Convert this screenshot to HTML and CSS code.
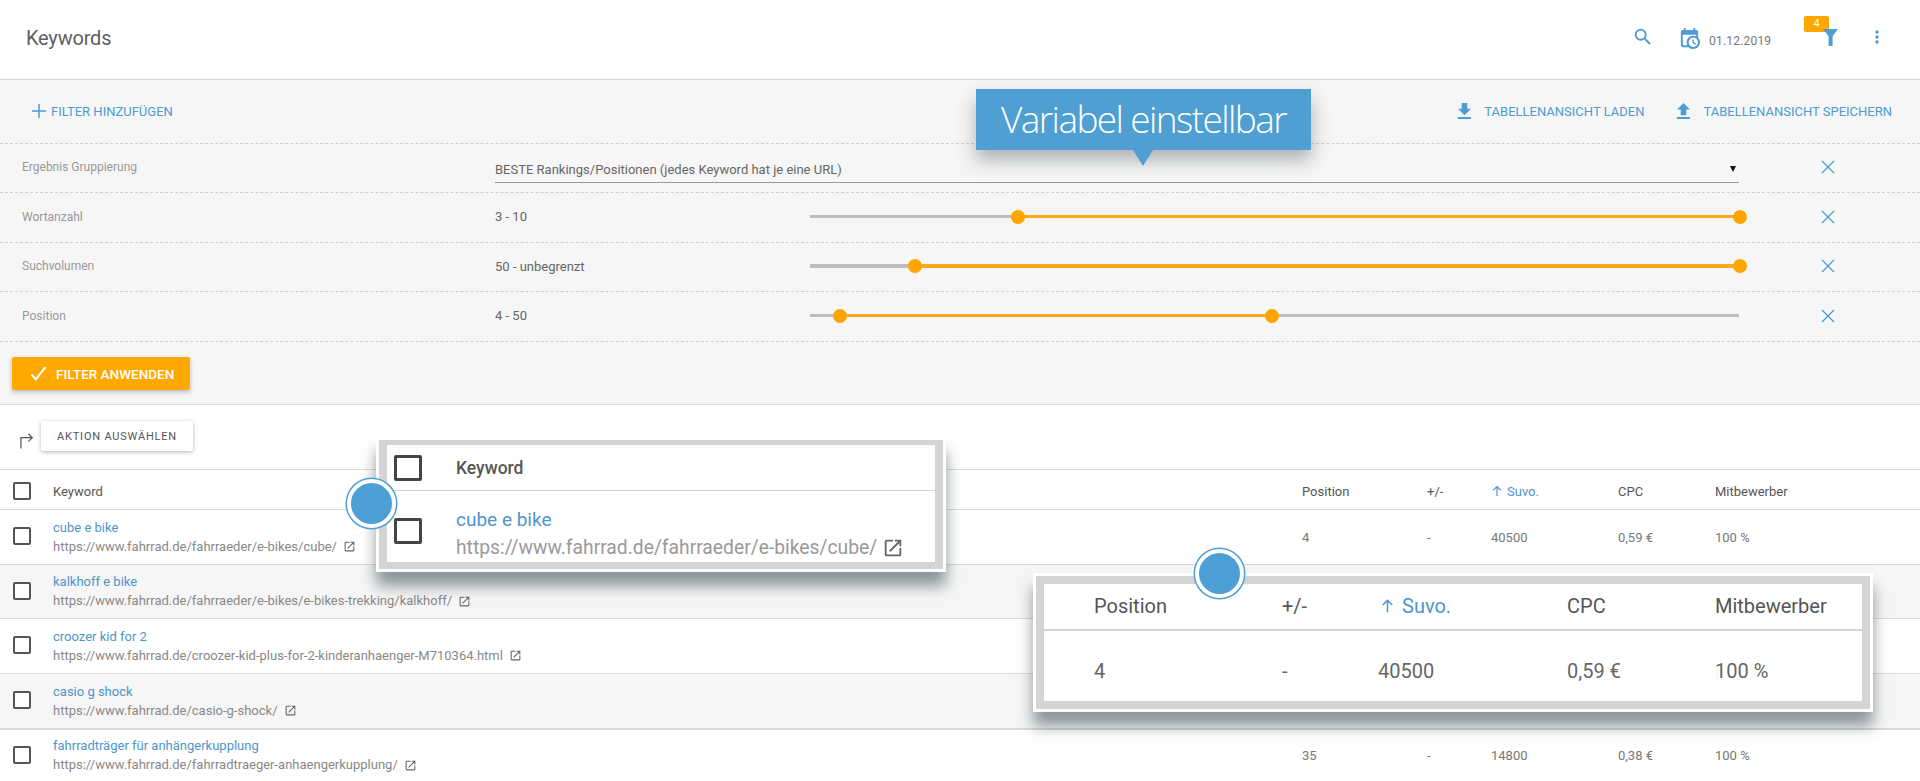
FILE: index.html
```html
<!DOCTYPE html>
<html lang="de">
<head>
<meta charset="utf-8">
<title>Keywords</title>
<link rel="stylesheet" href="styles.css">
</head>
<body>
<svg class="defs" width="0" height="0" aria-hidden="true">
  <symbol id="i-ext" viewBox="0 0 24 24"><path d="M19 19H5V5h7V3H5a2 2 0 0 0-2 2v14a2 2 0 0 0 2 2h14c1.1 0 2-.9 2-2v-7h-2v7zM14 3v2h3.59l-9.83 9.83 1.41 1.41L19 6.41V10h2V3h-7z"/></symbol>
  <symbol id="i-x" viewBox="0 0 14 14"><path d="M1 1l12 12M13 1L1 13" fill="none" stroke="currentColor" stroke-width="1.3"/></symbol>
  <symbol id="i-up" viewBox="0 0 12 12"><path d="M6 11V1.5M2.2 5.2L6 1.5l3.8 3.7" fill="none" stroke="currentColor" stroke-width="1.2"/></symbol>
</svg>

<header class="topbar">
  <h1 class="title">Keywords</h1>
  <div class="top-actions">
    <svg class="ic-search" viewBox="0 0 24 24"><path d="M15.5 14h-.79l-.28-.27A6.471 6.471 0 0 0 16 9.5 6.5 6.5 0 1 0 9.5 16c1.61 0 3.09-.59 4.23-1.57l.27.28v.79l5 4.99L20.49 19l-4.99-5zm-6 0C7.01 14 5 11.99 5 9.5S7.01 5 9.5 5 14 7.01 14 9.5 11.99 14 9.5 14z"/></svg>
    <svg class="ic-cal" viewBox="0 0 24 24"><path d="M15,13H16.5V15.82L18.94,17.23L18.19,18.53L15,16.69V13M19,8H5V19H9.67C9.24,18.09 9,17.07 9,16A7,7 0 0,1 16,9C17.07,9 18.09,9.24 19,9.67V8M5,21C3.89,21 3,20.1 3,19V5C3,3.89 3.89,3 5,3H6V1H8V3H16V1H18V3H19A2,2 0 0,1 21,5V11.1C22.24,12.36 23,14.09 23,16A7,7 0 0,1 16,23C14.09,23 12.36,22.24 11.1,21H5M16,11.15A4.85,4.85 0 0,0 11.15,16C11.15,18.68 13.32,20.85 16,20.85A4.85,4.85 0 0,0 20.85,16C20.85,13.32 18.68,11.15 16,11.15Z"/></svg>
    <span class="date">01.12.2019</span>
    <span class="funnel">
      <span class="badge">4</span>
      <svg class="ic-funnel" viewBox="0 0 15 17"><path d="M0 0h15L9.6 7.2V17H5.6V7.2z"/></svg>
    </span>
    <svg class="ic-more" viewBox="0 0 24 24"><path d="M12 8c1.1 0 2-.9 2-2s-.9-2-2-2-2 .9-2 2 .9 2 2 2zm0 2c-1.1 0-2 .9-2 2s.9 2 2 2 2-.9 2-2-.9-2-2-2zm0 6c-1.1 0-2 .9-2 2s.9 2 2 2 2-.9 2-2-.9-2-2-2z"/></svg>
  </div>
</header>

<section class="filters">
  <div class="filter-tools">
    <span class="tool tool-add">
      <svg class="ic-plus" viewBox="0 0 14 14"><path d="M7 0v14M0 7h14" fill="none" stroke="currentColor" stroke-width="1.5"/></svg>
      FILTER HINZUFÜGEN
    </span>
    <span class="tool tool-load">
      <svg class="ic-tool" viewBox="5 3 14 17"><path d="M19 9h-4V3H9v6H5l7 7 7-7zM5 18v2h14v-2H5z"/></svg>
      TABELLENANSICHT LADEN
    </span>
    <span class="tool tool-save">
      <svg class="ic-tool" viewBox="5 3 14 17"><path d="M9 16h6v-6h4l-7-7-7 7h4zm-4 2h14v2H5z"/></svg>
      TABELLENANSICHT SPEICHERN
    </span>
  </div>

  <div class="frow frow-49">
    <span class="flabel">Ergebnis Gruppierung</span>
    <div class="select">
      <span>BESTE Rankings/Positionen (jedes Keyword hat je eine URL)</span>
      <span class="caret"></span>
    </div>
    <svg class="ic-x"><use href="#i-x"/></svg>
  </div>
  <div class="frow frow-50">
    <span class="flabel">Wortanzahl</span>
    <span class="fvalue">3 - 10</span>
    <div class="slider">
      <span class="fill" style="left:22.4%;right:0"></span>
      <span class="thumb" style="left:22.4%"></span>
      <span class="thumb" style="left:100.1%"></span>
    </div>
    <svg class="ic-x"><use href="#i-x"/></svg>
  </div>
  <div class="frow frow-49">
    <span class="flabel">Suchvolumen</span>
    <span class="fvalue">50 - unbegrenzt</span>
    <div class="slider slider-thick">
      <span class="fill" style="left:11.3%;right:0"></span>
      <span class="thumb" style="left:11.3%"></span>
      <span class="thumb" style="left:100.1%"></span>
    </div>
    <svg class="ic-x"><use href="#i-x"/></svg>
  </div>
  <div class="frow frow-50">
    <span class="flabel">Position</span>
    <span class="fvalue">4 - 50</span>
    <div class="slider">
      <span class="fill" style="left:3.2%;right:50%"></span>
      <span class="thumb" style="left:3.2%"></span>
      <span class="thumb" style="left:49.7%"></span>
    </div>
    <svg class="ic-x"><use href="#i-x"/></svg>
  </div>
  <div class="apply-bar">
    <button class="apply">
      <svg class="ic-check" viewBox="0 0 16 16"><path d="M1.5 9l4 4.5L14.5 2" fill="none" stroke="currentColor" stroke-width="2"/></svg>
      FILTER ANWENDEN
    </button>
  </div>
</section>

<section class="table-wrap">
  <div class="actions">
    <svg class="ic-redirect" viewBox="0 0 15 17"><path d="M1 17V5.5h12M9 1.5l4.2 4-4.2 4" fill="none" stroke="#555" stroke-width="1.3"/></svg>
    <button class="action-btn">AKTION AUSWÄHLEN</button>
  </div>

  <div class="trow thead">
    <span class="box"></span>
    <span>Keyword</span>
    <span>Position</span>
    <span>+/-</span>
    <span class="sorted"><svg class="ic-up"><use href="#i-up"/></svg>Suvo.</span>
    <span>CPC</span>
    <span>Mitbewerber</span>
  </div>

  <div class="trow tbody">
    <span class="box"></span>
    <div class="kw"><a class="kw-link">cube e bike</a><span class="kw-url">https://www.fahrrad.de/fahrraeder/e-bikes/cube/<svg class="ic-ext"><use href="#i-ext"/></svg></span></div>
    <span>4</span><span>-</span><span>40500</span><span>0,59 €</span><span>100 %</span>
  </div>
  <div class="trow tbody alt row-54">
    <span class="box"></span>
    <div class="kw"><a class="kw-link">kalkhoff e bike</a><span class="kw-url">https://www.fahrrad.de/fahrraeder/e-bikes/e-bikes-trekking/kalkhoff/<svg class="ic-ext"><use href="#i-ext"/></svg></span></div>
  </div>
  <div class="trow tbody">
    <span class="box"></span>
    <div class="kw"><a class="kw-link">croozer kid for 2</a><span class="kw-url">https://www.fahrrad.de/croozer-kid-plus-for-2-kinderanhaenger-M710364.html<svg class="ic-ext"><use href="#i-ext"/></svg></span></div>
  </div>
  <div class="trow tbody alt thick">
    <span class="box"></span>
    <div class="kw"><a class="kw-link">casio g shock</a><span class="kw-url">https://www.fahrrad.de/casio-g-shock/<svg class="ic-ext"><use href="#i-ext"/></svg></span></div>
  </div>
  <div class="trow tbody last">
    <span class="box"></span>
    <div class="kw"><a class="kw-link">fahrradträger für anhängerkupplung</a><span class="kw-url">https://www.fahrrad.de/fahrradtraeger-anhaengerkupplung/<svg class="ic-ext"><use href="#i-ext"/></svg></span></div>
    <span>35</span><span>-</span><span>14800</span><span>0,38 €</span><span>100 %</span>
  </div>
</section>

<aside class="tip">Variabel einstellbar</aside>

<aside class="zoom zoom-left">
  <div class="zl-head"><span class="box box-lg"></span><span>Keyword</span></div>
  <div class="zl-row">
    <span class="box box-lg"></span>
    <div class="zl-kw"><a class="kw-link">cube e bike</a><span class="kw-url">https://www.fahrrad.de/fahrraeder/e-bikes/cube/<svg class="ic-ext"><use href="#i-ext"/></svg></span></div>
  </div>
</aside>

<aside class="zoom zoom-right">
  <div class="zr-row zr-head">
    <span>Position</span><span>+/-</span><span class="sorted"><svg class="ic-up"><use href="#i-up"/></svg>Suvo.</span><span>CPC</span><span>Mitbewerber</span>
  </div>
  <div class="zr-row zr-body">
    <span>4</span><span>-</span><span>40500</span><span>0,59 €</span><span>100 %</span>
  </div>
</aside>

<span class="dot dot-left"></span>
<span class="dot dot-right"></span>
</body>
</html>
```

FILE: styles.css
```css
* { box-sizing: border-box; }
html, body { height: 781px; overflow: hidden; }
body {
  margin: 0;
  position: relative;
  background: #fff;
  color: #666;
  font-family: Roboto, "Liberation Sans", sans-serif;
  font-size: 13px;
}
.defs { position: absolute; }

/* top bar */
.topbar {
  height: 80px;
  display: flex;
  align-items: center;
  justify-content: space-between;
  border-bottom: 1px solid #d6d6d6;
  padding: 0 33px 4px 26px;
}
.title { margin: 0; font-size: 20px; font-weight: 400; color: #5f5f5f; letter-spacing: -.2px; }
.top-actions { display: flex; align-items: center; height: 40px; }
.ic-search { width: 22px; height: 22px; fill: #4f9bd4; margin-right: 24px; position: relative; top: -1px; }
.ic-cal { width: 23px; height: 23px; fill: #4f9bd4; margin-right: 8px; position: relative; top: 1px; }
.date { color: #777; font-size: 12px; letter-spacing: .2px; width: 60px; margin-right: 54px; position: relative; top: 3px; white-space: nowrap; }
.funnel { position: relative; display: block; width: 15px; height: 17px; margin-right: 29px; }
.ic-funnel { display: block; width: 15px; height: 17px; fill: #4f9bd4; position: relative; }
.badge {
  position: absolute;
  left: -19px;
  top: -13px;
  width: 25px;
  height: 16px;
  background: #ffa500;
  color: #fff;
  font-size: 11px;
  line-height: 16px;
  text-align: center;
  border-radius: 2px;
}
.ic-more { width: 20px; height: 20px; fill: #4f9bd4; margin-right: 0; position: relative; top: -1px; }

/* filters */
.filters { background: #f6f6f6; border-bottom: 1px solid #dcdcdc; height: 325px; }
.filter-tools {
  height: 63px;
  display: flex;
  align-items: center;
  padding: 0 0 1px 32px;
}
.tool { display: inline-flex; align-items: center; color: #4f9bd4; font-size: 13px; white-space: nowrap; }
.ic-plus { width: 14px; height: 14px; margin-right: 5px; }
.ic-tool { width: 13px; height: 16px; fill: #4f9bd4; margin-right: 13px; }
.tool-load { margin-left: auto; }
.tool-save { margin-left: 33px; margin-right: 28px; }

.frow {
  display: grid;
  grid-template-columns: 473px 315px 929px 1fr;
  align-items: center;
  padding: 0 0 2px 22px;
  border-top: 1px dashed #cfcfcf;
}
.frow-49 { height: 49px; }
.frow-50 { height: 50px; }
.flabel { color: #999; font-size: 12px; }
.fvalue { font-size: 13px; color: #666; }
.select {
  grid-column: 2 / 4;
  display: flex;
  justify-content: space-between;
  align-items: center;
  height: 26px;
  margin-top: 5px;
  border-bottom: 1px solid #999;
  color: #666;
  font-size: 13px;
  padding-right: 3px;
}
.caret {
  width: 0; height: 0;
  border-left: 3px solid transparent;
  border-right: 3px solid transparent;
  border-top: 6px solid #111;
}
.ic-x { width: 14px; height: 14px; color: #4f9bd4; margin-left: 82px; }
.slider { position: relative; height: 3px; background: #bdbdbd; }
.slider-thick { height: 4px; }
.fill { position: absolute; top: 0; bottom: 0; background: #ffa81a; }
.thumb {
  position: absolute;
  top: 50%;
  width: 14px;
  height: 14px;
  margin: -7px 0 0 -7px;
  border-radius: 50%;
  background: #ffa500;
}
.apply-bar { height: 63px; border-top: 1px dashed #cfcfcf; padding: 15px 0 0 12px; }
.apply {
  display: flex;
  align-items: center;
  width: 178px;
  height: 33px;
  padding: 0 0 0 18px;
  border: 0;
  border-radius: 2px;
  background: #ffa800;
  color: #fff;
  font: 500 13.5px Roboto, sans-serif;
  box-shadow: 0 2px 5px rgba(0,0,0,.25);
  white-space: nowrap;
}
.ic-check { width: 17px; height: 17px; margin-right: 9px; flex: none; }

/* table */
.actions { height: 64px; display: flex; align-items: center; padding: 0 0 0 20px; }
.ic-redirect { width: 14px; height: 17px; margin: 6px 7px 0 0; }
.action-btn {
  width: 152px;
  height: 30px;
  margin-top: -2px;
  border: 0;
  border-radius: 2px;
  background: #fff;
  color: #555;
  font: 400 11px Roboto, sans-serif;
  letter-spacing: .8px;
  box-shadow: 0 1px 4px rgba(0,0,0,.3);
}
.trow {
  display: grid;
  grid-template-columns: 40px 1249px 125px 64px 127px 97px 1fr;
  align-items: center;
  padding-left: 13px;
  border-top: 1px solid #d9d9d9;
}
.thead { height: 40px; font-size: 13px; color: #555; padding-top: 3px; }
.tbody { height: 55px; color: #777; font-size: 13px; }
.tbody > .box { margin-top: -2px; }
.row-54 { height: 54px; }
.alt { background: #f6f6f6; }
.thick { border-bottom: 2px solid #d9d9d9; height: 57px; }
.last { border-top: 0; height: 51px; }
.sorted { color: #4f94cc; display: inline-flex; align-items: center; }
.ic-up { width: 12px; height: 12px; margin-right: 4px; }
.box { display: block; width: 18px; height: 18px; border: 2px solid #555; border-radius: 2px; background: #fff; }
.kw { display: flex; flex-direction: column; gap: 5px; min-width: 0; }
.kw-link { color: #4f94cc; font-size: 13px; line-height: 14px; }
.kw-url { color: #888; font-size: 13px; line-height: 14px; display: flex; align-items: center; white-space: nowrap; }
.ic-ext { width: 13px; height: 13px; fill: #666; margin-left: 6px; flex: none; }

/* overlays */
.tip {
  position: absolute;
  left: 976px;
  top: 89px;
  width: 335px;
  height: 61px;
  background: #4f9fd3;
  color: #fff;
  font-family: "Open Sans", sans-serif;
  font-weight: 300;
  font-size: 37px;
  line-height: 60px;
  letter-spacing: -1.6px;
  text-align: center;
  box-shadow: 0 10px 18px rgba(60,70,80,.4);
}
.tip::after {
  content: "";
  position: absolute;
  left: 157px;
  top: 61px;
  border-left: 10px solid transparent;
  border-right: 10px solid transparent;
  border-top: 16px solid #4f9fd3;
}
.zoom {
  position: absolute;
  background: #fff;
  border: 3px solid #fff;
  box-shadow: 0 14px 14px rgba(70,85,90,.6);
  color: #666;
}
.zoom-left {
  left: 376px;
  top: 437px;
  width: 570px;
  height: 135px;
  padding: 5px 8px 7px;
  background: #d4d4d4;
}
.zoom-left .kw-link { font-size: 19px; line-height: 22px; }
.zoom-left .kw-url { font-size: 19.3px; line-height: 22px; color: #999; }
.zoom-left .ic-ext { width: 22px; height: 22px; margin-left: 5px; }
.zl-head {
  height: 46px;
  display: flex;
  align-items: center;
  gap: 34px;
  padding-left: 7px;
  background: #fff;
  border-bottom: 1px solid #d4d4d4;
  font-size: 17.5px;
  font-weight: 500;
  color: #555;
}
.zl-row {
  height: 71px;
  display: flex;
  align-items: center;
  gap: 34px;
  padding-left: 7px;
  background: #fff;
}
.box-lg { width: 28px; height: 26px; border: 3px solid #444; flex: none; }
.zl-row .box-lg { margin-top: 8px; }
.zl-kw { display: flex; flex-direction: column; gap: 6px; margin-top: 14px; }
.zoom-right {
  left: 1033px;
  top: 573px;
  width: 840px;
  height: 139px;
  padding: 8px 8px;
  background: #d4d4d4;
}
.zr-row {
  display: grid;
  grid-template-columns: 188px 96px 189px 148px 1fr;
  align-items: center;
  padding-left: 50px;
  background: #fff;
  font-size: 20px;
}
.zr-head { height: 47px; border-bottom: 2px solid #d4d4d4; color: #555; padding-bottom: 2px; }
.zr-head .sorted { color: #4f94cc; margin-left: 2px; }
.zr-head .ic-up { width: 15px; height: 16px; margin-right: 7px; }
.zr-body { height: 70px; color: #666; padding-top: 10px; }
.dot {
  position: absolute;
  width: 49px;
  height: 49px;
  border-radius: 50%;
  background: #4d9fd6;
  border: 4px solid #fff;
  box-shadow: 0 0 0 1.5px #4d9fd6;
}
.dot-left { left: 347px; top: 479px; }
.dot-right { left: 1195px; top: 549px; }
```
